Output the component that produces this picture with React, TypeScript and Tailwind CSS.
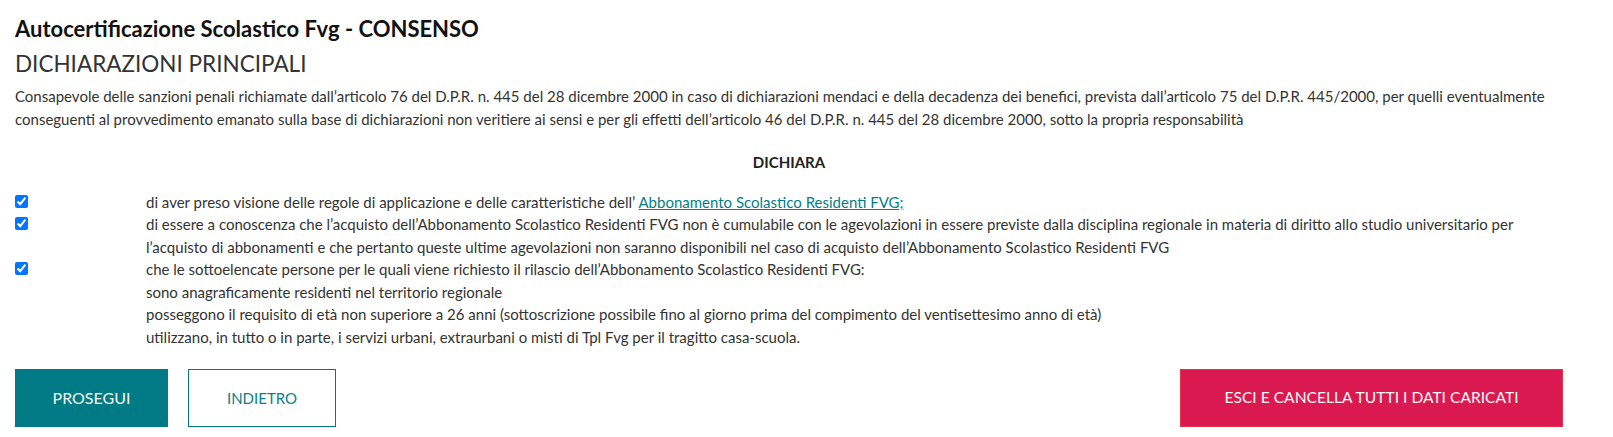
const sans = "font-['Lato','Noto_Sans','Liberation_Sans',sans-serif]";

const righe = [
  "sono anagraficamente residenti nel territorio regionale",
  "posseggono il requisito di età non superiore a 26 anni (sottoscrizione possibile fino al giorno prima del compimento del ventisettesimo anno di età)",
  "utilizzano, in tutto o in parte, i servizi urbani, extraurbani o misti di Tpl Fvg per il tragitto casa-scuola.",
];

const Spunta = () => (
  <input
    type="checkbox"
    defaultChecked
    className="mt-[4px] w-[13px] h-[13px] accent-[#0075ff]"
  />
);

const App = () => {
  return (
    <div className={`${sans} bg-white text-[#333333] w-[1613px] h-[437px] overflow-hidden`}>
      <div className="ml-[15px] w-[1548px] pt-[15px]">
        <h1 className="text-[22px] leading-[28px] font-bold text-[#111111]">
          Autocertificazione Scolastico Fvg - CONSENSO
        </h1>
        <h2 className="mt-[6px] text-[22.5px] leading-[30px] font-normal text-[#333333]">
          DICHIARAZIONI PRINCIPALI
        </h2>
        <p className="mt-[6px] text-[15px] leading-[22.5px]">
          Consapevole delle sanzioni penali richiamate dall’articolo 76 del
          D.P.R. n. 445 del 28 dicembre 2000 in caso di dichiarazioni mendaci e
          della decadenza dei benefici, prevista dall’articolo 75 del D.P.R.
          445/2000, per quelli eventualmente conseguenti al provvedimento
          emanato sulla base di dichiarazioni non veritiere ai sensi e per gli
          effetti dell’articolo 46 del D.P.R. n. 445 del 28 dicembre 2000, sotto
          la propria responsabilità
        </p>
        <p className="mt-[21px] text-center text-[15px] leading-[22.5px] font-bold text-[#222222]">
          DICHIARA
        </p>
        <div className="mt-[17px] grid grid-cols-[131px_1fr] text-[15px] leading-[22.5px]">
          <div>
            <Spunta />
          </div>
          <p>
            di aver preso visione delle regole di applicazione e delle
            caratteristiche dell’{" "}
            <a href="#" className="text-[#00818a] underline">
              Abbonamento Scolastico Residenti FVG;
            </a>
          </p>
          <div>
            <Spunta />
          </div>
          <p>
            di essere a conoscenza che l’acquisto dell’Abbonamento Scolastico
            Residenti FVG non è cumulabile con le agevolazioni in essere
            previste dalla disciplina regionale in materia di diritto allo
            studio universitario per l’acquisto di abbonamenti e che pertanto
            queste ultime agevolazioni non saranno disponibili nel caso di
            acquisto dell’Abbonamento Scolastico Residenti FVG
          </p>
          <div>
            <Spunta />
          </div>
          <div>
            <p>
              che le sottoelencate persone per le quali viene richiesto il
              rilascio dell’Abbonamento Scolastico Residenti FVG:
            </p>
            {righe.map((r) => (
              <p key={r}>{r}</p>
            ))}
          </div>
        </div>
        <div className="mt-[21px] flex items-center">
          <button className="w-[153px] h-[58px] bg-[#007b85] text-[#f4f8f2] text-[16px] uppercase">
            Prosegui
          </button>
          <button className="ml-[20px] w-[148px] h-[58px] border border-[#007b85] text-[#0a7f8a] text-[15px] uppercase">
            Indietro
          </button>
          <button className="ml-auto w-[383px] h-[58px] bg-[#da1951] border border-[#e5334c] text-[#fff8f4] text-[15.6px] uppercase">
            Esci e cancella tutti i dati caricati
          </button>
        </div>
      </div>
    </div>
  );
};

export default App;
